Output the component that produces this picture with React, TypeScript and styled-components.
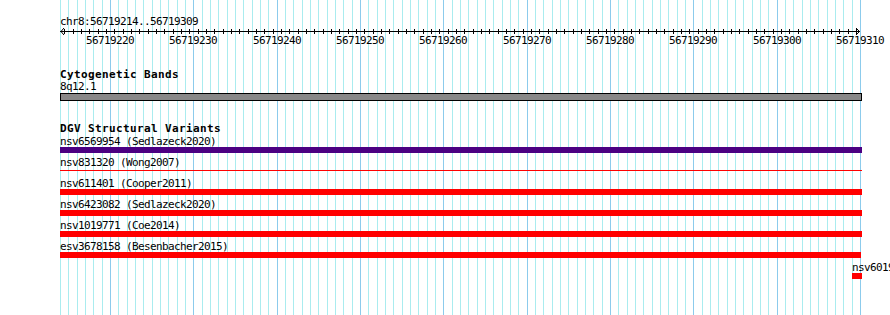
import React from "react";
import styled, { createGlobalStyle } from "styled-components";

const GlobalStyle = createGlobalStyle`
  html, body { margin: 0; padding: 0; background: #ffffff; }
`;

const REGION_START = 56719214;
const BASES = 96;
const ORIGIN_X = 60;
const REGION_PX = 800;
const PX_PER_BASE = REGION_PX / BASES;

const baseX = (i: number) => Math.round(ORIGIN_X + i * PX_PER_BASE);

const Page = styled.div`
  position: relative;
  width: 890px;
  height: 315px;
  overflow: hidden;
  background: #ffffff;
  font-family: "DejaVu Sans Mono", "Liberation Mono", monospace;
  font-size: 11px;
  color: #000000;
`;

const GridLayer = styled.svg`
  position: absolute;
  left: 0;
  top: 0;
  width: 890px;
  height: 315px;
  z-index: 0;
`;

const Content = styled.div`
  position: relative;
  z-index: 1;
  display: flex;
  flex-direction: column;
  padding: 16px 0 0 ${ORIGIN_X}px;
  width: 802px;
`;

const TextLine = styled.div`
  height: 11px;
  line-height: 11px;
  white-space: nowrap;
  letter-spacing: -0.62px;
`;

const TrackTitle = styled.div`
  height: 11px;
  line-height: 11px;
  white-space: nowrap;
  font-weight: bold;
  letter-spacing: 0.38px;
`;

const Ruler = styled.div`
  display: flex;
  flex-direction: column;
`;

const RulerAxis = styled.svg`
  display: block;
  width: 802px;
  height: 8px;
`;

const ScaleRow = styled.div`
  position: relative;
  height: 11px;
`;

const ScaleLabel = styled.span`
  position: absolute;
  top: 0;
  line-height: 11px;
  white-space: nowrap;
  letter-spacing: -0.62px;
  transform: translateX(-50%);
`;

const Track = styled.section<{ $gap: number }>`
  display: flex;
  flex-direction: column;
  margin-top: ${(p) => p.$gap}px;
`;

const BandLabel = styled(TextLine)`
  margin-top: 1px;
`;

const BandBar = styled.div`
  box-sizing: border-box;
  margin-top: 1px;
  width: 802px;
  height: 8px;
  border: 1px solid #000000;
  background: #888888;
`;

const FeatureList = styled.div`
  display: flex;
  flex-direction: column;
  margin-top: 2px;
`;

const FeatureRow = styled.div<{ $offset: number }>`
  display: flex;
  flex-direction: column;
  margin-left: ${(p) => p.$offset}px;
  margin-bottom: 4px;
`;

const FeatureSlot = styled.div`
  height: 6px;
  display: flex;
  align-items: flex-start;
`;

const FeatureBar = styled.div<{ $color: string; $thin?: boolean; $width: number }>`
  width: ${(p) => p.$width}px;
  height: ${(p) => (p.$thin ? 1 : 6)}px;
  margin-top: ${(p) => (p.$thin ? 2 : 0)}px;
  background: ${(p) => p.$color};
`;

type Feature = {
  name: string;
  offset: number;
  width: number;
  color: string;
  thin?: boolean;
};

const RED = "#ff0000";
const PURPLE = "#4b0082";

const features: Feature[] = [
  { name: "nsv6569954 (Sedlazeck2020)", offset: 0, width: 802, color: PURPLE },
  { name: "nsv831320 (Wong2007)", offset: 0, width: 802, color: RED, thin: true },
  { name: "nsv611401 (Cooper2011)", offset: 0, width: 802, color: RED },
  { name: "nsv6423082 (Sedlazeck2020)", offset: 0, width: 802, color: RED },
  { name: "nsv1019771 (Coe2014)", offset: 0, width: 802, color: RED },
  { name: "esv3678158 (Besenbacher2015)", offset: 0, width: 801, color: RED },
  { name: "nsv6019", offset: 792, width: 10, color: RED },
];

const Grid = () => {
  const lines = [];
  for (let i = 0; i <= BASES; i++) {
    const major = (i - 6) % 10 === 0 && i >= 6;
    lines.push(
      <rect
        key={i}
        x={baseX(i)}
        y={0}
        width={1}
        height={315}
        fill={major ? "#8ccbec" : "#aaecef"}
      />
    );
  }
  return (
    <GridLayer viewBox="0 0 890 315" aria-hidden>
      {lines}
    </GridLayer>
  );
};

const Axis = () => {
  const ticks = [];
  for (let i = 0; i < BASES; i++) {
    const x = Math.round(i * PX_PER_BASE + PX_PER_BASE / 2);
    ticks.push(<rect key={i} x={x} y={2} width={1} height={5} fill="#000" />);
  }
  return (
    <RulerAxis viewBox="0 0 802 8" aria-hidden>
      <rect x={0} y={4} width={800} height={1} fill="#000" />
      {ticks}
      <polyline points="4,1 1,4.5 4,8" fill="none" stroke="#000" strokeWidth={1} />
      <polyline points="796,1 799.5,4.5 796,8" fill="none" stroke="#000" strokeWidth={1} />
    </RulerAxis>
  );
};

const scaleMarks = Array.from({ length: 10 }, (_, k) => 6 + k * 10);

export default function App() {
  return (
    <>
      <GlobalStyle />
      <Page>
        <Grid />
        <Content>
          <Ruler>
            <TextLine>chr8:56719214..56719309</TextLine>
            <Axis />
            <ScaleRow>
              {scaleMarks.map((i) => (
                <ScaleLabel key={i} style={{ left: baseX(i) - ORIGIN_X }}>
                  {REGION_START + i}
                </ScaleLabel>
              ))}
            </ScaleRow>
          </Ruler>

          <Track $gap={23}>
            <TrackTitle>Cytogenetic Bands</TrackTitle>
            <BandLabel>8q12.1</BandLabel>
            <BandBar />
          </Track>

          <Track $gap={22}>
            <TrackTitle>DGV Structural Variants</TrackTitle>
            <FeatureList>
              {features.map((f) => (
                <FeatureRow key={f.name} $offset={f.offset}>
                  <TextLine>{f.name}</TextLine>
                  <FeatureSlot>
                    <FeatureBar $color={f.color} $thin={f.thin} $width={f.width} />
                  </FeatureSlot>
                </FeatureRow>
              ))}
            </FeatureList>
          </Track>
        </Content>
      </Page>
    </>
  );
}
